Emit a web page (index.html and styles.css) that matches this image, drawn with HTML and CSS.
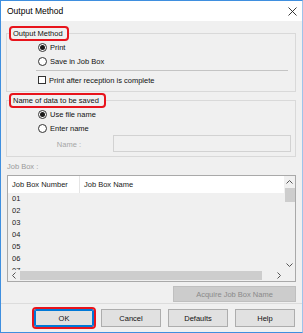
FILE: index.html
```html
<!DOCTYPE html>
<html>
<head>
<meta charset="utf-8">
<link rel="stylesheet" href="styles.css">
</head>
<body>
<div class="window">
  <div class="titlebar">
    <span class="title">Output Method</span>
    <svg class="close" width="9" height="9" viewBox="0 0 9 9"><path d="M0.5 0.5 L8.5 8.5 M8.5 0.5 L0.5 8.5" stroke="#222" stroke-width="0.9" fill="none"/></svg>
  </div>
  <div class="content">
    <fieldset class="group g1">
      <legend class="mark">Output Method</legend>
      <div class="opts">
        <div class="opt"><span class="radio on"></span><span>Print</span></div>
        <div class="opt"><span class="radio"></span><span>Save in Job Box</span></div>
        <div class="sep"></div>
        <div class="opt chk-row"><span class="check"></span><span>Print after reception is complete</span></div>
      </div>
    </fieldset>
    <fieldset class="group g2">
      <legend class="mark mark2">Name of data to be saved</legend>
      <div class="opts">
        <div class="opt"><span class="radio on"></span><span>Use file name</span></div>
        <div class="opt"><span class="radio"></span><span>Enter name</span></div>
        <div class="name-row"><span class="name-label">Name :</span><span class="name-input"></span></div>
      </div>
    </fieldset>
    <div class="jb-label">Job Box :</div>
    <div class="list">
      <div class="list-main">
        <div class="list-head"><div class="col1">Job Box Number</div><div class="col2">Job Box Name</div></div>
        <div class="rows">
          <div class="row">01</div>
          <div class="row">02</div>
          <div class="row">03</div>
          <div class="row">04</div>
          <div class="row">05</div>
          <div class="row">06</div>
          <div class="row">07</div>
        </div>
      </div>
      <div class="vscroll">
        <div class="arrow"><svg width="7" height="4" viewBox="0 0 7 4"><path d="M0.5 3.5 L3.5 0.5 L6.5 3.5" stroke="#555" stroke-width="1" fill="none"/></svg></div>
        <div class="vthumb"></div>
        <div class="vspace"></div>
        <div class="arrow"><svg width="7" height="4" viewBox="0 0 7 4"><path d="M0.5 0.5 L3.5 3.5 L6.5 0.5" stroke="#555" stroke-width="1" fill="none"/></svg></div>
      </div>
      <div class="hscroll">
        <div class="harrow"><svg width="4" height="7" viewBox="0 0 4 7"><path d="M3.5 0.5 L0.5 3.5 L3.5 6.5" stroke="#555" stroke-width="1" fill="none"/></svg></div>
        <div class="hthumb"></div>
        <div class="harrow"><svg width="4" height="7" viewBox="0 0 4 7"><path d="M0.5 0.5 L3.5 3.5 L0.5 6.5" stroke="#555" stroke-width="1" fill="none"/></svg></div>
      </div>
      <div class="corner"></div>
    </div>
    <div class="acq-row"><div class="btn acq">Acquire Job Box Name</div></div>
  </div>
  <div class="footer">
    <div class="btn ok">OK</div>
    <div class="btn">Cancel</div>
    <div class="btn">Defaults</div>
    <div class="btn">Help</div>
  </div>
</div>
</body>
</html>
```
FILE: styles.css
```css
html, body {
  margin: 0;
  padding: 0;
  background: #ffffff;
}
body {
  font-family: "Liberation Sans", Arial, sans-serif;
  font-size: 7.5px;
  color: #111;
}
.window {
  width: 303px;
  height: 333px;
  box-sizing: border-box;
  border: 1px solid #3f8fdf;
  border-right-color: #9fc3ea;
  display: flex;
  flex-direction: column;
  background: #f0f0f0;
}
.titlebar {
  height: 20px;
  background: #ffffff;
  display: flex;
  align-items: center;
  justify-content: space-between;
  padding: 0 5px 0 6px;
  flex: none;
}
.title {
  font-size: 8.5px;
  color: #000;
}
.close {
  display: block;
}
.content {
  flex: 1;
  padding: 5px 6px 0 5px;
  display: flex;
  flex-direction: column;
  border-bottom: 1px solid #dcdcdc;
}
.group {
  margin: 0;
  padding: 0;
  min-inline-size: 0;
  border: 1px solid #d9d9d9;
}
.g1 {
  padding-bottom: 4px;
}
.g2 {
  margin-top: 1px;
  padding-bottom: 4px;
}
.mark {
  margin-left: 2px;
  padding: 0 4px 0 2px;
  height: 15px;
  box-sizing: border-box;
  line-height: 11px;
  border: 2px solid #e8141c;
  border-radius: 4px;
  color: #111;
}
.mark2 {
  padding-right: 5px;
}
.opts {
  margin-top: -1px;
  display: flex;
  flex-direction: column;
}
.opt {
  height: 14px;
  display: flex;
  align-items: center;
}
.radio {
  width: 9px;
  height: 9px;
  box-sizing: border-box;
  border: 1px solid #333;
  border-radius: 50%;
  background: #fff;
  margin-left: 31px;
  margin-right: 3px;
  display: flex;
  align-items: center;
  justify-content: center;
}
.radio.on::after {
  content: "";
  width: 5px;
  height: 5px;
  border-radius: 50%;
  background: #1a1a1a;
}
.sep {
  margin: 2px 7px 0 29px;
  height: 1px;
  background: #c4c4c4;
}
.chk-row {
  margin-top: 2px;
}
.check {
  width: 8px;
  height: 8px;
  box-sizing: border-box;
  border: 1px solid #333;
  background: #fff;
  margin-left: 31px;
  margin-right: 3px;
}
.name-row {
  height: 17px;
  display: flex;
  align-items: center;
}
.name-label {
  width: 74px;
  text-align: right;
  color: #a6a6a6;
  padding-top: 2px;
}
.name-input {
  margin-left: 32px;
  margin-right: 4px;
  flex: 1;
  height: 17px;
  box-sizing: border-box;
  border: 1px solid #d2d2d2;
  background: #f0f0f0;
}
.jb-label {
  margin-top: 4px;
  height: 12px;
  line-height: 12px;
  padding-left: 1px;
  color: #9a9a9a;
}
.list {
  margin-top: 2px;
  margin-left: 1px;
  height: 107px;
  box-sizing: border-box;
  border: 1px solid #a9a9a9;
  display: grid;
  grid-template-columns: 1fr 11px;
  grid-template-rows: 1fr 11px;
  background: #f0f0f0;
}
.list-main {
  overflow: hidden;
  display: flex;
  flex-direction: column;
}
.list-head {
  height: 17px;
  flex: none;
  background: #fff;
  display: flex;
  align-items: stretch;
  color: #1a1a1a;
}
.col1 {
  width: 67px;
  padding-left: 4px;
  border-right: 1px solid #e5e5e5;
  display: flex;
  align-items: center;
}
.col2 {
  padding-left: 4px;
  display: flex;
  align-items: center;
}
.rows {
  display: flex;
  flex-direction: column;
}
.row {
  height: 12px;
  line-height: 12px;
  padding-left: 4px;
  flex: none;
  color: #222;
}
.vscroll {
  display: flex;
  flex-direction: column;
  align-items: center;
  background: #f0f0f0;
}
.arrow {
  height: 11px;
  width: 11px;
  display: flex;
  align-items: center;
  justify-content: center;
  flex: none;
}
.vthumb {
  width: 10px;
  height: 14px;
  margin-top: 1px;
  background: #cdcdcd;
  flex: none;
}
.vspace {
  flex: 1;
}
.hscroll {
  display: flex;
  align-items: center;
  background: #f0f0f0;
}
.harrow {
  width: 11px;
  height: 11px;
  display: flex;
  align-items: center;
  justify-content: center;
  flex: none;
}
.hthumb {
  flex: 1;
  height: 9px;
  margin: 0 11px 0 1px;
  background: #cdcdcd;
}
.corner {
  background: #f0f0f0;
}
.acq-row {
  margin-top: 4px;
  display: flex;
  justify-content: flex-end;
}
.btn {
  width: 60px;
  height: 18px;
  box-sizing: border-box;
  border: 1px solid #adadad;
  background: #e1e1e1;
  display: flex;
  align-items: center;
  justify-content: center;
  color: #111;
}
.acq {
  width: 123px;
  height: 16px;
  background: #cccccc;
  border-color: #bfbfbf;
  color: #8a8a8a;
}
.footer {
  height: 28px;
  box-sizing: border-box;
  padding: 5px 6px 0 33px;
  display: flex;
  gap: 7px;
  flex: none;
}
.ok {
  border: 1px solid #0078d7;
  box-shadow: inset 0 0 0 1px #0078d7;
  border-radius: 2px;
  outline: 2px solid #e8141c;
  outline-offset: 0px;
}
```
